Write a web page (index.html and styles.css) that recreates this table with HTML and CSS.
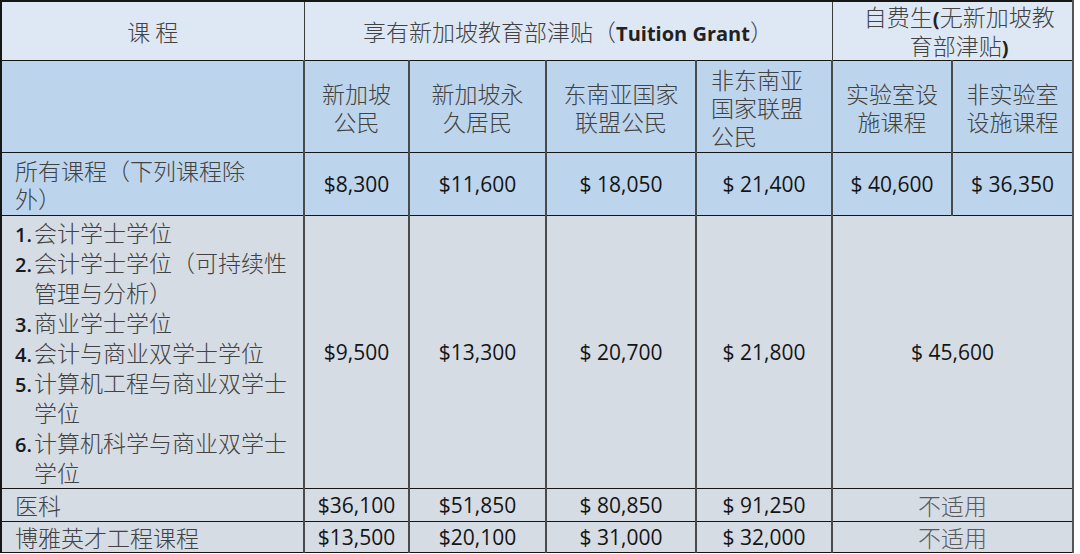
FILE: index.html
```html
<!DOCTYPE html>
<html lang="zh-CN">
<head>
<meta charset="utf-8">
<title>学费</title>
<link rel="stylesheet" href="styles.css">
</head>
<body>
<table class="fees">
  <colgroup>
    <col class="c-course">
    <col class="c-sc">
    <col class="c-pr">
    <col class="c-asean">
    <col class="c-nonasean">
    <col class="c-lab">
    <col class="c-nonlab">
  </colgroup>
  <tr class="r-head1">
    <td class="center">课 程</td>
    <td class="center" colspan="4">享有新加坡教育部津贴（<b class="latin">Tuition Grant</b>）</td>
    <td class="center self" colspan="2">自费生<b class="latin">(</b>无新加坡教<br>育部津贴<b class="latin">)</b></td>
  </tr>
  <tr class="r-head2">
    <td></td>
    <td class="center">新加坡<br>公民</td>
    <td class="center">新加坡永<br>久居民</td>
    <td class="center">东南亚国家<br>联盟公民</td>
    <td class="left-pad">非东南亚<br>国家联盟<br>公民</td>
    <td class="center">实验室设<br>施课程</td>
    <td class="center">非实验室<br>设施课程</td>
  </tr>
  <tr class="r-all">
    <td class="label">所有课程（下列课程除<br>外）</td>
    <td class="num">$8,300</td>
    <td class="num">$11,600</td>
    <td class="num">$ 18,050</td>
    <td class="num">$ 21,400</td>
    <td class="num">$ 40,600</td>
    <td class="num">$ 36,350</td>
  </tr>
  <tr class="r-list body">
    <td class="label">
      <div class="item"><span class="n">1.</span>会计学士学位</div>
      <div class="item"><span class="n">2.</span>会计学士学位（可持续性<br>管理与分析）</div>
      <div class="item"><span class="n">3.</span>商业学士学位</div>
      <div class="item"><span class="n">4.</span>会计与商业双学士学位</div>
      <div class="item"><span class="n">5.</span>计算机工程与商业双学士<br>学位</div>
      <div class="item"><span class="n">6.</span>计算机科学与商业双学士<br>学位</div>
    </td>
    <td class="num">$9,500</td>
    <td class="num">$13,300</td>
    <td class="num">$ 20,700</td>
    <td class="num">$ 21,800</td>
    <td class="num" colspan="2">$ 45,600</td>
  </tr>
  <tr class="r-med body">
    <td class="label">医科</td>
    <td class="num">$36,100</td>
    <td class="num">$51,850</td>
    <td class="num">$ 80,850</td>
    <td class="num">$ 91,250</td>
    <td class="na" colspan="2">不适用</td>
  </tr>
  <tr class="r-eng body">
    <td class="label">博雅英才工程课程</td>
    <td class="num">$13,500</td>
    <td class="num">$20,100</td>
    <td class="num">$ 31,000</td>
    <td class="num">$ 32,000</td>
    <td class="na" colspan="2">不适用</td>
  </tr>
</table>
</body>
</html>
```

FILE: styles.css
```css
html, body {
  margin: 0;
  padding: 0;
  background: #ffffff;
}

body {
  font-family: "Noto Sans CJK SC", "Open Sans", sans-serif;
  font-weight: 300;
  color: #424242;
}

.fees {
  border-collapse: collapse;
  table-layout: fixed;
  width: 1072px;
  font-size: 23px;
  line-height: 28px;
}

.c-course { width: 303px; }
.c-sc { width: 105px; }
.c-pr { width: 137px; }
.c-asean { width: 150px; }
.c-nonasean { width: 136px; }
.c-lab { width: 120px; }
.c-nonlab { width: 121px; }

.fees td {
  border-top: 1px solid #161616;
  border-bottom: 1px solid #161616;
  border-left: 1px solid #3c3c3c;
  border-right: 1px solid #3c3c3c;
  padding: 0;
  vertical-align: middle;
  white-space: nowrap;
}

.r-head1 td {
  height: 57px;
  background: #dee8f4;
  border-top: 2px solid #161616;
}

.r-head1 .self { line-height: 29px; }

.r-head2 td {
  height: 91px;
  background: #bdd5ec;
}

.r-all td {
  height: 62px;
  background: #bdd5ec;
}

.body td {
  background: #d6dce4;
}

.r-list td { height: 272px; }
.r-med td { height: 32px; }
.r-eng td { height: 30px; }

.r-list td, .r-med td, .r-eng td, .r-head2 td, .r-all td {
  border-left: 2px solid #4a4a4a;
  border-right: 2px solid #4a4a4a;
}

.fees td:first-child { border-left: 2px solid #161616; }
.fees tr td:last-child { border-right: 2px solid #555555; }

.center { text-align: center; }
.self { padding-left: 14px !important; }

.left-pad {
  text-align: left;
  padding-left: 14px !important;
}

.label {
  text-align: left;
  padding-left: 13px !important;
}

.latin {
  font-family: "Open Sans", sans-serif;
  font-weight: 700;
  font-size: 20px;
  line-height: 1;
  color: #222222;
}

.num {
  text-align: center;
  font-family: "Open Sans", sans-serif;
  font-weight: 400;
  font-size: 21px;
  color: #141414;
}

.na {
  text-align: center;
  color: #5a5a5a;
}

.item {
  padding-left: 19px;
  text-indent: -19px;
  line-height: 30px;
}

.item .n {
  display: inline-block;
  width: 19px;
  text-indent: 0;
  line-height: 1;
  font-family: "Open Sans", sans-serif;
  font-size: 20px;
  font-weight: 600;
  color: #1a1a1a;
}
```
